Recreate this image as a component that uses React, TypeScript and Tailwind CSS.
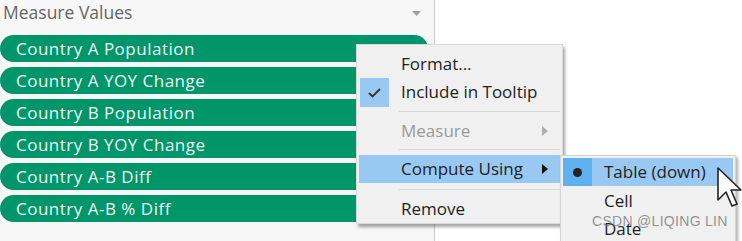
import React from "react";

const pills = [
  "Country A Population",
  "Country A YOY Change",
  "Country B Population",
  "Country B YOY Change",
  "Country A-B Diff",
  "Country A-B % Diff",
];

const Arrow = ({ color }: { color: string }) => (
  <svg width="6" height="10" viewBox="0 0 6 10" className="absolute right-[12px] top-1/2 -translate-y-1/2">
    <path d="M0 0 L6 5 L0 10 Z" fill={color} />
  </svg>
);

const Separator = ({ h, top }: { h: string; top: string }) => (
  <div className={`${h} ${top} pl-[40px]`}>
    <div className="h-px bg-[#d7d7d7]" />
  </div>
);

const App: React.FC = () => {
  return (
    <div className="relative w-[742px] h-[241px] overflow-hidden bg-white font-['Open_Sans','Noto_Sans',sans-serif]">
      {/* shelf panel */}
      <div className="w-[435px] h-full bg-[#f7f7f7] border-r border-[#cbcbcb]">
        <div className="h-[26px] flex items-center justify-between pl-[3px] pr-[13px]">
          <span className="text-[17.5px] text-[#666666] leading-none">Measure Values</span>
          <svg width="9" height="5" viewBox="0 0 9 5">
            <path d="M0 0 L9 0 L4.5 5 Z" fill="#a0a0a0" />
          </svg>
        </div>
        <div className="mt-[9px] flex flex-col gap-[5px]">
          {pills.map(p => (
            <div
              key={p}
              className="w-[428px] h-[27px] rounded-full bg-[#00966a] flex items-center pl-[16px] text-[17px] tracking-[0.5px] font-medium text-[#eef8f3] leading-none"
            >
              {p}
            </div>
          ))}
        </div>
      </div>

      {/* context menu */}
      <div className="absolute left-[356px] top-[44px] w-[207px] h-[180px] bg-[#f0f0f0] border border-[#d9d9d9] shadow-[2px_3px_3px_rgba(0,0,0,0.35)] pt-[5px] px-[2px] text-[17px] text-[#1e1e1e]">
        <div className="h-[28px] flex items-center pl-[42px]">Format...</div>
        <div className="relative h-[28px] flex items-center pl-[42px]">
          <div className="absolute left-[1px] top-0 w-[29px] h-[29px] bg-[#99c9f3] flex items-center justify-center">
            <svg width="13" height="10" viewBox="0 0 13 10">
              <path d="M1 5 L4.5 8.5 L12 1" stroke="#333" strokeWidth="1.8" fill="none" />
            </svg>
          </div>
          Include in Tooltip
        </div>
        <Separator h="h-[11px]" top="pt-[5px]" />
        <div className="relative h-[28px] flex items-center pl-[42px] text-[#9a9a9a]">
          Measure
          <Arrow color="#b0b0b0" />
        </div>
        <Separator h="h-[10px]" top="pt-[4px]" />
        <div className="relative h-[28px] flex items-center pl-[42px] bg-[#99c9f3]">
          Compute Using
          <Arrow color="#111" />
        </div>
        <Separator h="h-[12px]" top="pt-[6px]" />
        <div className="h-[28px] flex items-center pl-[42px]">Remove</div>
      </div>

      {/* submenu */}
      <div className="absolute left-[560px] top-[155px] w-[176px] h-[100px] bg-[#f0f0f0] border border-[#d3d3d3] shadow-[2px_2px_3px_rgba(0,0,0,0.3)] pt-[2px] px-[2px] text-[17px] text-[#1e1e1e]">
        <div className="h-[28px] flex bg-[#99c9f3]">
          <div className="w-[29px] h-full bg-[#5fb0ef] flex items-center justify-center">
            <div className="w-[9px] h-[9px] rounded-full bg-[#222]" />
          </div>
          <div className="flex items-center pl-[12px]">Table (down)</div>
        </div>
        <div className="h-[29px] flex items-center pl-[41px]">Cell</div>
        <div className="h-[28px] flex items-center pl-[41px]">Date</div>
      </div>

      {/* watermark */}
      <div className="absolute left-[592px] top-[214px] text-[14px] leading-none text-[#7a7a7a]/80 font-['Liberation_Sans',sans-serif] tracking-[0.3px]">
        CSDN @LIQING LIN
      </div>

      {/* cursor */}
      <svg
        className="absolute left-[716px] top-[166px]"
        width="26"
        height="42"
        viewBox="0 0 13 21"
      >
        <path
          d="M1 1 L1 17 L5 13 L8 20 L10.5 19 L7.5 12 L12.5 12 Z"
          fill="#fff"
          stroke="#222"
          strokeWidth="0.8"
          strokeLinejoin="round"
        />
      </svg>
    </div>
  );
};

export default App;
